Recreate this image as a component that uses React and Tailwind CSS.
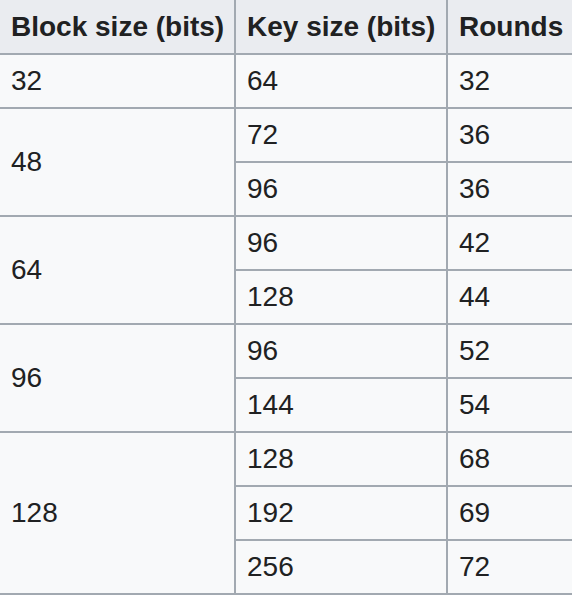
const rows = [
  { block: '32', keys: [['64', '32']] },
  { block: '48', keys: [['72', '36'], ['96', '36']] },
  { block: '64', keys: [['96', '42'], ['128', '44']] },
  { block: '96', keys: [['96', '52'], ['144', '54']] },
  { block: '128', keys: [['128', '68'], ['192', '69'], ['256', '72']] },
]

const cell = 'h-[54px] pl-[11px] pr-[4px] align-middle whitespace-nowrap border-b-2 border-[#a2a9b1]'

export default function App(){
  return (
    <div className="w-[572px] h-[598px] bg-white overflow-hidden" style={{ fontFamily: '"Liberation Sans", Arial, sans-serif' }}>
      <table className="border-collapse text-[28px] leading-[40px] text-[#202122] table-fixed w-[572px]">
        <colgroup>
          <col className="w-[235px]" />
          <col className="w-[212px]" />
          <col className="w-[125px]" />
        </colgroup>
        <thead>
          <tr className="bg-[#eaecf0]">
            <th className={cell + ' text-left font-bold pl-[10px] border-r-2'}>Block size (bits)</th>
            <th className={cell + ' text-left font-bold border-r-2'}>Key size (bits)</th>
            <th className={cell + ' text-left font-bold'}>Rounds</th>
          </tr>
        </thead>
        <tbody className="bg-[#f8f9fa]">
          {rows.map(r => r.keys.map((k, i) => (
            <tr key={r.block + k[0]}>
              {i === 0 && <td rowSpan={r.keys.length} className={cell + ' pl-[10px] border-r-2'}>{r.block}</td>}
              <td className={cell + ' border-r-2'}>{k[0]}</td>
              <td className={cell}>{k[1]}</td>
            </tr>
          )))}
        </tbody>
      </table>
    </div>
  )
}
